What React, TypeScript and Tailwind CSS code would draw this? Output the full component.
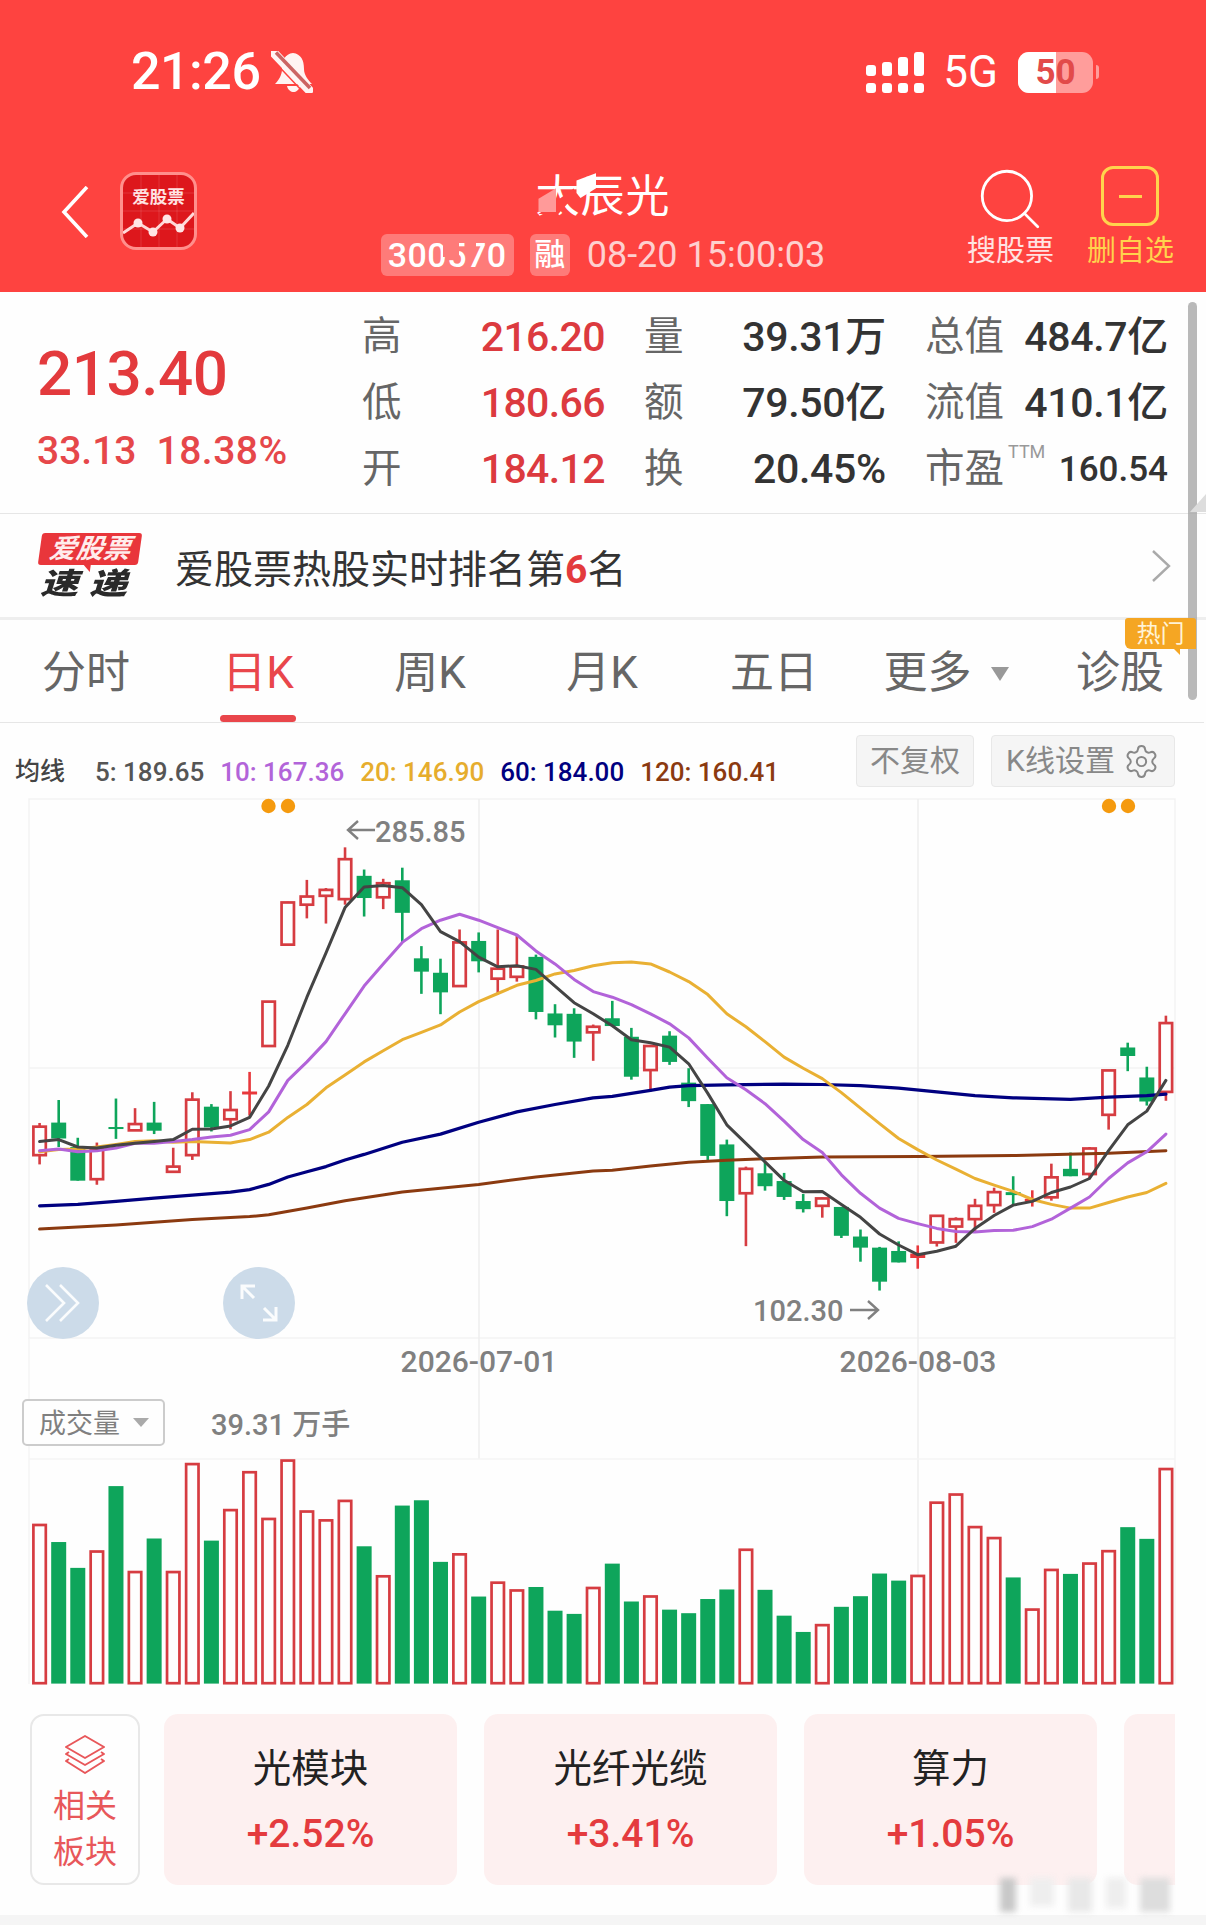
import React from 'react';
import { Search, Settings } from 'lucide-react';

const RED = '#d63c41';
const GREEN = '#0ea55b';

// hi, top, bottom, lo, colour (r hollow, g filled, f filled red), read off the crop grid
const candles: [number, number, number, number, string][] = [
  [900, 910, 987, 1012, 'r'], [838, 899, 942, 965, 'g'], [940, 965, 1056, 1056, 'g'], [953, 970, 1052, 1067, 'r'],
  [834, 911, 916, 943, 'g'], [860, 903, 920, 920, 'r'], [843, 899, 921, 930, 'g'], [967, 1018, 1032, 1032, 'r'],
  [817, 837, 987, 1000, 'r'], [849, 856, 912, 923, 'g'], [814, 865, 890, 917, 'r'], [762, 815, 823, 880, 'f'],
  [572, 572, 692, 692, 'r'], [302, 304, 418, 418, 'r'], [243, 288, 310, 347, 'r'], [265, 270, 286, 361, 'r'],
  [155, 187, 295, 310, 'r'], [215, 232, 292, 342, 'g'], [240, 252, 290, 322, 'r'], [210, 244, 332, 412, 'g'],
  [422, 455, 491, 551, 'g'], [456, 494, 547, 606, 'g'], [377, 412, 530, 530, 'r'], [385, 408, 463, 493, 'g'],
  [377, 483, 510, 552, 'r'], [390, 477, 505, 518, 'r'], [445, 451, 600, 620, 'g'], [579, 604, 636, 669, 'g'],
  [590, 605, 680, 724, 'g'], [634, 640, 655, 732, 'r'], [570, 617, 638, 638, 'g'], [643, 667, 775, 783, 'g'],
  [690, 692, 757, 815, 'r'], [652, 664, 735, 743, 'g'], [752, 791, 841, 857, 'g'], [849, 849, 989, 1000, 'g'],
  [945, 958, 1111, 1152, 'g'], [1018, 1024, 1090, 1233, 'r'], [1005, 1036, 1071, 1083, 'g'], [1035, 1057, 1100, 1108, 'g'],
  [1092, 1111, 1133, 1142, 'g'], [1102, 1104, 1124, 1156, 'r'], [1127, 1127, 1205, 1211, 'g'], [1188, 1207, 1237, 1275, 'g'],
  [1235, 1237, 1329, 1353, 'g'], [1220, 1246, 1277, 1277, 'g'], [1231, 1253, 1265, 1294, 'f'], [1149, 1151, 1223, 1234, 'r'],
  [1155, 1160, 1180, 1224, 'r'], [1105, 1124, 1160, 1195, 'r'], [1075, 1087, 1122, 1143, 'r'], [1044, 1087, 1095, 1120, 'g'],
  [1082, 1105, 1113, 1126, 'f'], [1010, 1047, 1101, 1110, 'r'], [980, 1024, 1044, 1044, 'g'], [965, 969, 1038, 1052, 'r'],
  [758, 758, 878, 918, 'r'], [683, 696, 719, 760, 'g'], [748, 777, 842, 853, 'g'], [610, 630, 816, 840, 'r'],
];

const volumes: [number, string][] = [
  [435, 'r'], [486, 'g'], [559, 'g'], [510, 'r'], [328, 'g'], [568, 'r'], [476, 'g'], [568, 'r'], [263, 'r'], [482, 'g'],
  [393, 'r'], [286, 'r'], [418, 'r'], [253, 'r'], [397, 'r'], [422, 'r'], [367, 'r'], [498, 'g'], [580, 'r'], [383, 'g'],
  [368, 'g'], [542, 'g'], [518, 'r'], [640, 'g'], [598, 'r'], [620, 'r'], [613, 'g'], [680, 'g'], [689, 'g'], [613, 'r'],
  [547, 'g'], [654, 'g'], [637, 'r'], [677, 'g'], [687, 'g'], [647, 'g'], [620, 'g'], [505, 'r'], [621, 'g'], [694, 'g'],
  [740, 'g'], [718, 'r'], [669, 'g'], [639, 'g'], [575, 'g'], [595, 'g'], [579, 'r'], [372, 'r'], [349, 'r'], [441, 'r'],
  [472, 'r'], [586, 'g'], [674, 'r'], [562, 'r'], [576, 'g'], [544, 'r'], [509, 'r'], [444, 'g'], [477, 'g'], [277, 'r'],
];

const ma5 = [950, 945, 965, 968, 960, 955, 950, 945, 917, 916, 908, 885, 800, 690, 560, 440, 318, 262, 258, 264, 310, 383, 410, 452, 478, 475, 485, 530, 575, 605, 637, 675, 683, 695, 740, 820, 905, 955, 1005, 1055, 1086, 1085, 1120, 1155, 1200, 1230, 1256, 1247, 1233, 1185, 1150, 1122, 1112, 1088, 1073, 1050, 975, 905, 868, 785];
const ma10 = [975, 970, 978, 975, 968, 955, 955, 950, 945, 938, 933, 918, 870, 785, 735, 680, 605, 530, 470, 412, 375, 352, 336, 352, 372, 392, 435, 470, 512, 545, 560, 580, 605, 632, 670, 725, 778, 810, 848, 895, 945, 980, 1040, 1090, 1130, 1158, 1172, 1185, 1193, 1195, 1191, 1190, 1180, 1160, 1130, 1100, 1050, 1008, 978, 930];
const ma20 = [978, 972, 970, 965, 958, 950, 948, 952, 950, 952, 954, 945, 925, 885, 850, 805, 770, 735, 705, 675, 655, 635, 600, 572, 550, 528, 515, 497, 488, 475, 467, 465, 470, 492, 518, 553, 605, 640, 680, 722, 752, 780, 818, 860, 902, 942, 972, 1000, 1025, 1050, 1068, 1085, 1107, 1120, 1130, 1130, 1115, 1100, 1088, 1063];
const ma60: [number, number][] = [[0, 1124], [2, 1120], [4, 1112], [6, 1103], [8, 1095], [10, 1087], [11, 1080], [12, 1066], [13, 1046], [14, 1032], [15, 1018], [16, 1000], [17, 985], [19, 952], [21, 930], [23, 898], [25, 870], [27, 850], [29, 832], [30, 828], [32, 812], [33, 803], [34, 799], [36, 797], [39, 795], [41, 796], [43, 799], [45, 806], [47, 816], [49, 826], [51, 832], [54, 836], [56, 830], [58, 826], [59, 822]];
const ma120: [number, number][] = [[0, 1187], [4, 1176], [8, 1161], [11, 1153], [12, 1148], [14, 1130], [16, 1110], [19, 1087], [23, 1066], [26, 1046], [29, 1030], [30, 1028], [32, 1016], [34, 1006], [36, 1001], [38, 997], [41, 992], [46, 991], [51, 988], [56, 982], [59, 975]];

const cx = (i: number) => 39.6 + 19.09 * i;
const ky = (v: number) => 790 + v / 2.703;
const vy = (v: number) => 1370 + v / 2.825;

const poly = (pts: [number, number][]) => pts.map(([i, v]) => `${cx(i).toFixed(1)},${ky(v).toFixed(1)}`).join(' ');
const series = (vals: number[]) => poly(vals.map((v, i) => [i, v] as [number, number]));

function KChart() {
  return (
    <svg width="1206" height="924" viewBox="0 790 1206 924" className="block">
      {/* grid */}
      <g stroke="#eeeeee" strokeWidth="1.5" fill="none">
        <rect x="29" y="799" width="1146" height="539" stroke="#f3f3f3" />
        <line x1="29" y1="1068" x2="1175" y2="1068" stroke="#f3f3f3" />
        <line x1="479" y1="799" x2="479" y2="1459" />
        <line x1="918" y1="799" x2="918" y2="1684" />
        <line x1="29" y1="1338" x2="29" y2="1684" stroke="#f5f5f5" />
        <line x1="1175" y1="1338" x2="1175" y2="1684" stroke="#f5f5f5" />
        <line x1="29" y1="1459" x2="1175" y2="1459" stroke="#f5f5f5" />
      </g>

      {/* orange markers */}
      <g fill="#f59a0e">
        <circle cx="268.5" cy="806" r="7.2" />
        <circle cx="288" cy="806" r="7.2" />
        <circle cx="1109" cy="806" r="7.2" />
        <circle cx="1128" cy="806" r="7.2" />
      </g>

      {/* candles */}
      {candles.map(([hi, top, bot, lo, c], i) => {
        const x = cx(i);
        const color = c === 'g' ? GREEN : c === 'f' ? '#e8383c' : RED;
        return (
          <g key={i}>
            <line x1={x} y1={ky(hi)} x2={x} y2={ky(lo)} stroke={color} strokeWidth="2.6" />
            {c === 'r' ? (
              <rect x={x - 6.2} y={ky(top)} width="12.4" height={ky(bot) - ky(top)} fill="#fefefe" stroke={color} strokeWidth="2.7" />
            ) : (
              <rect x={x - 7.5} y={ky(top)} width="15" height={Math.max(ky(bot) - ky(top), 2)} fill={color} />
            )}
          </g>
        );
      })}

      {/* moving averages */}
      <g fill="none" strokeLinejoin="round" strokeLinecap="round">
        <polyline points={poly(ma120)} stroke="#8b3a10" strokeWidth="3" />
        <polyline points={poly(ma60)} stroke="#000080" strokeWidth="3.2" />
        <polyline points={series(ma20)} stroke="#e9b033" strokeWidth="3" />
        <polyline points={series(ma10)} stroke="#b263d9" strokeWidth="3" />
        <polyline points={series(ma5)} stroke="#444444" strokeWidth="3" />
      </g>

      {/* hi / lo labels and dates */}
      <g fill="#808080" fontSize="29" fontWeight="500" fontFamily="Roboto, sans-serif">
        <text x="375" y="842">285.85</text>
        <text x="753" y="1321">102.30</text>
        <text x="479" y="1372" textAnchor="middle" fontSize="30">2026-07-01</text>
        <text x="918" y="1372" textAnchor="middle" fontSize="30">2026-08-03</text>
      </g>
      <g fill="none" stroke="#808080" strokeWidth="2.4">
        <path d="M375 830 H349 M358 821 L348 830 L358 839" />
        <path d="M850 1310 H877 M868 1301 L878 1310 L868 1319" />
      </g>

      {/* volume */}
      {volumes.map(([top, c], i) => {
        const x = cx(i);
        return c === 'g' ? (
          <rect key={i} x={x - 7.5} y={vy(top)} width="15" height={1683.6 - vy(top)} fill={GREEN} />
        ) : (
          <rect key={i} x={x - 6.2} y={vy(top) + 1} width="12.4" height={1682.2 - vy(top)} fill="#fefefe" stroke={RED} strokeWidth="2.7" />
        );
      })}
    </svg>
  );
}

function AppIcon() {
  return (
    <div className="relative w-[77px] h-[78px] rounded-[16px] border-[3px] border-[#ff8f8c] bg-[#dd171c] overflow-hidden flex justify-center">
      <svg className="absolute left-0 top-0" width="71" height="72" viewBox="0 0 71 72" fill="none">
        <g stroke="#ffffff" strokeOpacity="0.13" strokeWidth="1">
          <path d="M18 0 V72 M36 0 V72 M54 0 V72 M0 18 H71 M0 36 H71 M0 54 H71" />
        </g>
        <path d="M0 58 L15 48 L30 57 L44 44 L57 53 L71 38" stroke="#ffd8d8" strokeWidth="3" strokeLinejoin="round" />
        <g fill="#ffe6e6">
          <circle cx="15" cy="48" r="4.5" />
          <circle cx="30" cy="57" r="4.5" />
          <circle cx="44" cy="44" r="4.5" />
          <circle cx="57" cy="53" r="4.5" />
        </g>
      </svg>
      <span className="relative mt-[12px] text-[17.5px] leading-[20px] font-bold text-[#ffe3e3]">爱股票</span>
    </div>
  );
}

function BellSlash() {
  return (
    <svg width="42" height="42" viewBox="0 0 42 42" className="shrink-0">
      <path d="M22 2 C14 3 11 9 11 18 C11 24 8 29 4 33 H41 C37 29 33 24 33 18 C33 9 30 3 22 2 Z" fill="#fff4f3" />
      <path d="M16 35 H29 C28 39 25 41 22.5 41 C20 41 17 39 16 35 Z" fill="#fff4f3" />
      <path d="M2 2 L38 40" stroke="#fe4340" strokeWidth="1.5" transform="translate(-4 3)" />
      <path d="M2 1 L38 39" stroke="#fff4f3" strokeWidth="9" strokeLinecap="round" />
      <path d="M5 1.5 L39 37" stroke="#cc6463" strokeWidth="3.5" />
    </svg>
  );
}

function SignalDots() {
  const tops = ['h-[11px]', 'h-[14px]', 'h-[19px]', 'h-[24px]'];
  return (
    <div className="flex items-end gap-[6px] h-[41px]">
      {tops.map((h) => (
        <div key={h} className="flex flex-col gap-[7px]">
          <div className={`w-[10px] ${h} rounded-[3px] bg-white`} />
          <div className="w-[10px] h-[10px] rounded-[3px] bg-white" />
        </div>
      ))}
    </div>
  );
}

function StatCell({ label, value, valueClass, sup }: { label: string; value: string; valueClass: string; sup?: boolean }) {
  return (
    <div className="flex items-center justify-between h-[66px]">
      <span className="relative text-[39.5px] leading-none text-[#666666]">
        {label}
        {sup && <span className="absolute left-[83px] top-[-6px] text-[18px] leading-none text-[#999999]">TTM</span>}
      </span>
      <span className={`leading-none font-medium ${valueClass}`}>{value}</span>
    </div>
  );
}

const tabs = ['分时', '日K', '周K', '月K', '五日'];

const movingAverages = [
  { text: '5: 189.65', color: 'text-[#555555]' },
  { text: '10: 167.36', color: 'text-[#b264d9]' },
  { text: '20: 146.90', color: 'text-[#e6ad2d]' },
  { text: '60: 184.00', color: 'text-[#000080]' },
  { text: '120: 160.41', color: 'text-[#8b3a10]' },
];

const sectors = [
  { name: '光模块', pct: '+2.52%' },
  { name: '光纤光缆', pct: '+3.41%' },
  { name: '算力', pct: '+1.05%' },
];

const redValue = 'text-[41px] tracking-[-0.6px] text-[#dc3a3f]';
const darkValue = 'text-[41px] tracking-[-0.3px] text-[#333333]';

export default function App() {
  return (
    <div className="relative w-[1206px] h-[1925px] overflow-hidden bg-[#fefefe] font-['Roboto','Noto_Sans_CJK_SC',sans-serif]">
      {/* Red header */}
      <header className="h-[292px] bg-[#fe4340] text-white">
        <div className="flex items-center justify-between pt-[50px] pl-[131px] pr-[107px] h-[94px]">
          <div className="flex items-center gap-[11px]">
            <span className="text-[52px] leading-none font-medium tracking-[-0.5px]">21:26</span>
            <BellSlash />
          </div>
          <div className="flex items-center">
            <SignalDots />
            <span className="ml-[19px] text-[44px] leading-none">5G</span>
            <div className="relative ml-[20px] w-[75px] h-[41px] rounded-[11px] bg-[#ff9d9b] overflow-hidden flex items-center justify-center">
              <div className="absolute left-0 top-0 bottom-0 w-[38px] bg-white" />
              <span className="relative text-[35px] leading-none font-bold text-[#e24a4a]">50</span>
            </div>
            <div className="ml-[3px] w-[3px] h-[14px] rounded-r-full bg-[#ff9d9b]" />
          </div>
        </div>

        <div className="grid grid-cols-[1fr_auto_1fr] mt-[72px] h-[126px]">
          <div className="flex items-start pl-[61px]">
            <svg className="mt-[20px]" width="28" height="52" viewBox="0 0 28 52" fill="none" stroke="#ffffff" strokeWidth="3.6">
              <path d="M26 1 L3 26 L26 51" />
            </svg>
            <div className="ml-[31px] mt-[6px]">
              <AppIcon />
            </div>
          </div>

          <div className="flex flex-col items-center">
            <div className="relative mt-[3px] text-[44px] leading-[56px] tracking-[1px]">
              太辰光
              <div className="absolute left-[3px] top-[19px] w-[36px] h-[26px] bg-[#fe4340] [clip-path:polygon(0_100%,100%_0,100%_30%,55%_100%)]" />
              <div className="absolute left-[3px] top-[19px] w-[18px] h-[24px] bg-[#ff9a99] [clip-path:polygon(100%_0,100%_100%,0_100%,0_45%)]" />
              <div className="absolute left-[41px] top-[4px] w-[20px] h-[25px] bg-white [clip-path:polygon(100%_0,100%_60%,20%_100%,0_80%,0_30%)]" />
            </div>
            <div className="flex items-center mt-[9px] h-[42px]">
              <span className="relative h-[42px] w-[133px] rounded-[6px] bg-white/30 text-[34px] font-medium tracking-[0.5px] leading-[42px] text-center overflow-hidden">
                300570
                <span className="absolute left-[62px] top-[8px] w-[16px] h-[15px] bg-[#fe7b79]" />
                <span className="absolute left-[85px] top-[8px] w-[10px] h-[9px] bg-[#fe7b79]" />
              </span>
              <span className="ml-[16px] h-[42px] w-[40px] rounded-[6px] bg-white/30 text-[31px] font-medium leading-[42px] text-center">融</span>
              <span className="ml-[17px] text-[36px] leading-[42px] text-white/75">08-20 15:00:03</span>
            </div>
          </div>

          <div className="flex items-start justify-end pr-[32px] gap-[33px]">
            <div className="flex flex-col items-center">
              <Search size={74} strokeWidth={2.8} absoluteStrokeWidth className="mt-[-4px] -mb-[3px]" />
              <span className="text-[29px] leading-[36px] text-white/85">搜股票</span>
            </div>
            <div className="flex flex-col items-center">
              <div className="w-[58px] h-[60px] rounded-[12px] border-[3px] border-[#ffd34d] flex items-center justify-center">
                <div className="w-[23px] h-[3px] bg-[#ffd34d]" />
              </div>
              <span className="mt-[7px] text-[29px] leading-[36px] text-[#ffd34d]">删自选</span>
            </div>
          </div>
        </div>
      </header>

      {/* Quote */}
      <section className="flex h-[222px] pt-[12px] border-b border-[#e6e6e6]">
        <div className="w-[363px] pl-[37px] pt-[39px]">
          <div className="text-[62px] tracking-[-0.5px] leading-none font-medium text-[#e33a3d]">213.40</div>
          <div className="flex gap-[20px] mt-[27px] text-[39px] leading-none font-medium text-[#e6474a]">
            <span>33.13</span>
            <span className="tracking-[0.5px]">18.38%</span>
          </div>
        </div>
        <div className="grid grid-cols-[243px_242px_243px] gap-x-[39px] h-[198px] -translate-x-[1px]">
          <StatCell label="高" value="216.20" valueClass={redValue} />
          <StatCell label="量" value="39.31万" valueClass={darkValue} />
          <StatCell label="总值" value="484.7亿" valueClass={darkValue} />
          <StatCell label="低" value="180.66" valueClass={redValue} />
          <StatCell label="额" value="79.50亿" valueClass={darkValue} />
          <StatCell label="流值" value="410.1亿" valueClass={darkValue} />
          <StatCell label="开" value="184.12" valueClass={redValue} />
          <StatCell label="换" value="20.45%" valueClass={darkValue} />
          <StatCell label="市盈" value="160.54" valueClass="text-[35px] text-[#333333]" sup />
        </div>
      </section>

      {/* Hot rank news */}
      <section className="flex items-center h-[106px] pl-[40px] pr-[35px] border-b-[3px] border-[#eeeeee]">
        <div className="flex flex-col items-start w-[103px] shrink-0 mt-[2px]">
          <div className="relative w-[100px] h-[32px] bg-[#e9363b] rounded-[3px] -skew-x-[8deg] text-center text-[27px] leading-[32px] font-bold italic text-[#ffecec]">
            爱股票
            <span className="absolute left-[44px] top-[30px] w-0 h-0 border-l-[9px] border-t-[9px] border-l-transparent border-t-[#e9363b]" />
          </div>
          <div className="h-[32px] mt-[3px] text-[38px] leading-[32px] font-black italic text-[#2a2a2a] tracking-[11px] scale-y-[0.78]">速递</div>
        </div>
        <div className="ml-[32px] mt-[10px] text-[39px] leading-none text-[#333333]">
          爱股票热股实时排名第<span className="font-bold text-[#e33a3d]">6</span>名
        </div>
        <svg className="ml-auto" width="20" height="32" viewBox="0 0 20 32" fill="none" stroke="#aaaaaa" strokeWidth="2.4">
          <path d="M2 1 L18 16 L2 31" />
        </svg>
      </section>

      {/* Period tabs */}
      <nav className="relative grid grid-cols-7 h-[103px] w-[1204px] border-b border-[#e6e6e6] text-[44px] leading-none text-[#666666]">
        {tabs.map((t) => (
          <div key={t} className={`relative flex justify-center pt-[31px] ${t === '日K' ? 'text-[#e9464b]' : ''}`}>
            {t}
            {t === '日K' && <div className="absolute bottom-0 left-[48px] w-[76px] h-[7px] rounded-full bg-[#e9464b]" />}
          </div>
        ))}
        <div className="flex justify-center pt-[31px]">
          更多
          <span className="ml-[19px] mt-[16px] w-0 h-0 border-l-[9px] border-r-[9px] border-t-[14px] border-l-transparent border-r-transparent border-t-[#999999]" />
        </div>
        <div className="flex justify-center pt-[31px] pl-[4px]">诊股</div>
        <div className="absolute z-10 right-[8px] top-[-2px] w-[71px] h-[31px] rounded-t-[3px] rounded-bl-[6px] bg-[#f5a623] text-center text-[24px] leading-[33px] text-[#fff3d6]">
          热门
          <span className="absolute right-[16px] top-[29px] w-0 h-0 border-l-[8px] border-t-[8px] border-l-transparent border-t-[#f5a623]" />
        </div>
      </nav>

      {/* Moving average legend */}
      <section className="flex h-[67px] pl-[15px]">
        <div className="flex items-center self-end h-[37px] text-[26px] leading-none font-medium">
          <span className="text-[#444444] w-[80px] text-[25px]">均线</span>
          <div className="flex gap-[16px]">
            {movingAverages.map((m) => (
              <span key={m.text} className={m.color}>{m.text}</span>
            ))}
          </div>
        </div>
        <div className="flex gap-[17px] ml-auto mr-[31px] mt-[12px] text-[30px] leading-none text-[#888888]">
          <div className="flex items-center justify-center w-[118px] h-[52px] rounded-[4px] bg-[#f5f5f5] border border-[#e8e8e8]">不复权</div>
          <div className="flex items-center justify-center gap-[8px] w-[184px] h-[52px] rounded-[4px] bg-[#f5f5f5] border border-[#e8e8e8]">
            K线设置
            <Settings size={37} strokeWidth={2} absoluteStrokeWidth />
          </div>
        </div>
      </section>

      {/* Charts */}
      <section className="relative h-[924px]">
        <KChart />
        <div className="absolute left-[27px] top-[477px] flex items-center justify-center w-[72px] h-[72px] rounded-full bg-[#ccdbe9]">
          <svg width="38" height="40" viewBox="0 0 38 40" fill="none" stroke="#ffffff" strokeOpacity="0.9" strokeWidth="2.6">
            <path d="M2 2 L20 20 L2 38 M16 2 L34 20 L16 38" />
          </svg>
        </div>
        <div className="absolute left-[223px] top-[477px] flex items-center justify-center w-[72px] h-[72px] rounded-full bg-[#ccdbe9]">
          <svg width="38" height="38" viewBox="0 0 38 38" fill="none" stroke="#ffffff" strokeOpacity="0.9" strokeWidth="3">
            <path d="M2 15 V2 H15 M3 3 L14 14 M24 24 L35 35 M23 36 H36 V23" />
          </svg>
        </div>
        <div className="absolute left-[22px] top-[609px] flex items-center w-[143px] h-[47px] pl-[15px] pt-[4px] rounded-[5px] border-2 border-[#cccccc] bg-[#fefefe] text-[27px] leading-none text-[#808080]">
          成交量
          <span className="ml-[13px] -mt-[4px] w-0 h-0 border-l-[8px] border-r-[8px] border-t-[9px] border-l-transparent border-r-transparent border-t-[#aaaaaa]" />
        </div>
        <div className="absolute left-[211px] top-[621px] text-[29px] leading-none font-medium text-[#808080]">39.31 万手</div>
      </section>

      {/* Related sectors */}
      <section className="flex gap-[24px] ml-[30px] w-[1145px] h-[171px] overflow-hidden">
        <div className="flex flex-col items-center shrink-0 w-[110px] rounded-[14px] border-2 border-[#e8e8e8] text-[32px] leading-[47px] text-[#e8575a]">
          <svg className="mt-[19px] mb-[8px]" width="42" height="40" viewBox="0 0 42 40" fill="none" stroke="#e8575a" strokeWidth="2" strokeLinejoin="round">
            <path d="M21 1 L40 12 L21 23 L2 12 Z" />
            <path d="M5 17 L2 19 L21 30 L40 19 L37 17" />
            <path d="M5 24 L2 26 L21 38 L40 26 L37 24" />
          </svg>
          <span>相关</span>
          <span className="-mt-[1px]">板块</span>
        </div>
        <div className="flex gap-[27px]">
          {sectors.map((s) => (
            <div key={s.name} className="flex flex-col items-center shrink-0 w-[293px] rounded-[14px] bg-[#fdf0f0]">
              <span className="mt-[36px] text-[38.5px] leading-none text-[#222222]">{s.name}</span>
              <span className="mt-[26px] text-[39px] leading-none font-medium text-[#e43b3e]">{s.pct}</span>
            </div>
          ))}
          <div className="shrink-0 w-[293px] rounded-[14px] bg-[#fdf0f0]" />
        </div>
      </section>

      <div className="mt-[30px] h-[10px] bg-[#f5f5f5]" />

      {/* Scrollbar and edge handle */}
      <div className="absolute left-[1188px] top-[302px] w-[9px] h-[398px] rounded-full bg-[#a8a8a8]/80" />
      <div className="absolute left-[1190px] top-[494px] w-0 h-0 border-l-[16px] border-b-[18px] border-l-transparent border-b-[#dddddd]" />

      {/* Blurred watermark */}
      <div className="absolute left-[1000px] top-[1878px] flex gap-[14px] blur-[3px]">
        <div className="w-[16px] h-[34px] bg-[#c8c8c8]" />
        <div className="w-[24px] h-[28px] bg-[#eeeeee]" />
        <div className="w-[24px] h-[34px] bg-[#e8e8e8]" />
        <div className="w-[20px] h-[30px] bg-[#eeeeee]" />
        <div className="w-[30px] h-[34px] bg-[#dddddd]" />
      </div>
    </div>
  );
}
